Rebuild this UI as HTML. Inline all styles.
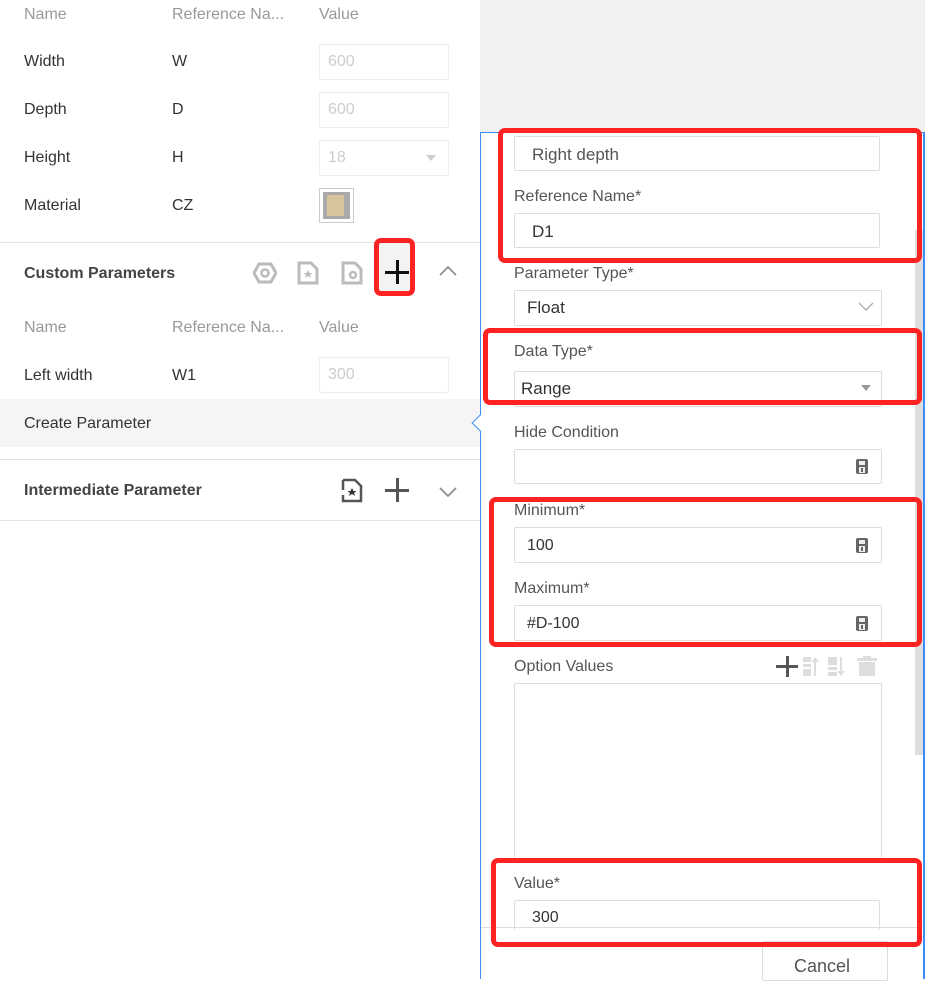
<!DOCTYPE html><html><head><style>
body{margin:0;width:925px;height:979px;position:relative;overflow:hidden;font-family:"Liberation Sans",sans-serif;background:#fff;color:#333}
div,span{position:absolute;box-sizing:border-box}
.t{font-size:16px;line-height:20px;white-space:nowrap}
.h{color:#999}
.l{color:#555}
.inp{border:1px solid #ddd;border-radius:2px;background:#fff}
.dis{border:1px solid #eee;border-radius:2px;color:#ccc;font-size:16px;padding:7px 8px;line-height:20px}
.hr{height:1px;background:#e2e2e2}
.red{border:5px solid #f22;border-radius:7px}
.calc{width:12px;height:15px;background:#666;border-radius:2px}
.calc:before{content:"";position:absolute;left:3px;top:2px;width:6px;height:4px;background:#eee}
.calc:after{content:"";position:absolute;left:3px;top:8px;width:6px;height:4px;border-top:1px solid #eee;border-bottom:1px solid #eee;background:linear-gradient(90deg,#eee 2px,#666 2px,#666 4px,#eee 4px)}
</style></head><body>
<!-- right gray bg -->
<div style="left:480px;top:0;width:445px;height:979px;background:#f2f2f2"></div>
<!-- left panel -->
<div class="t h" style="left:24px;top:5px">Name</div>
<div class="t h" style="left:172px;top:5px">Reference Na...</div>
<div class="t h" style="left:319px;top:5px">Value</div>
<div class="t" style="left:24px;top:52px">Width</div><div class="t" style="left:172px;top:52px">W</div>
<div class="dis" style="left:319px;top:44px;width:130px;height:36px">600</div>
<div class="t" style="left:24px;top:100px">Depth</div><div class="t" style="left:172px;top:100px">D</div>
<div class="dis" style="left:319px;top:92px;width:130px;height:36px">600</div>
<div class="t" style="left:24px;top:148px">Height</div><div class="t" style="left:172px;top:148px">H</div>
<div class="dis" style="left:319px;top:140px;width:130px;height:36px">18<span style="right:12px;top:14px;border:5px solid transparent;border-top:6px solid #ccc;border-bottom:0"></span></div>
<div class="t" style="left:24px;top:196px">Material</div><div class="t" style="left:172px;top:196px">CZ</div>
<div style="left:319px;top:188px;width:35px;height:35px;border:1px solid #ccc"><span style="left:3px;top:3px;width:27px;height:27px;background:#aaa"></span><span style="left:7px;top:6px;width:17px;height:21px;background:#d8c49a"></span></div>
<div class="hr" style="left:0;top:242px;width:480px"></div>
<div class="t" style="left:24px;top:264px;font-weight:bold;color:#444">Custom Parameters</div>
<svg style="position:absolute;left:253px;top:262px" width="24" height="22"><polygon points="6,2 18,2 23,11 18,20 6,20 1,11" fill="none" stroke="#bbb" stroke-width="3"/><circle cx="12" cy="11" r="3.5" fill="none" stroke="#bbb" stroke-width="2.5"/></svg>
<svg style="position:absolute;left:297px;top:261px" width="24" height="24"><path d="M2 2h12l6 6v14H2z" fill="none" stroke="#bbb" stroke-width="3"/><path d="M11 9l1.5 3h3l-2.5 2 1 3-3-2-3 2 1-3-2.5-2h3z" fill="#bbb"/></svg>
<svg style="position:absolute;left:341px;top:261px" width="24" height="24"><path d="M2 2h12l6 6v14H2z" fill="none" stroke="#bbb" stroke-width="3"/><circle cx="12" cy="14" r="3" fill="none" stroke="#bbb" stroke-width="2.5"/></svg>
<div style="left:379px;top:241px;width:33px;height:53px;background:#f3f3f3"></div>
<div style="left:385px;top:271px;width:24px;height:2.5px;background:#111"></div>
<div style="left:396px;top:260px;width:2.5px;height:24px;background:#111"></div>
<div class="red" style="left:374px;top:238px;width:41px;height:58px"></div>
<svg style="position:absolute;left:438px;top:265px" width="20" height="12"><path d="M2 10l8-8 8 8" fill="none" stroke="#888" stroke-width="1.6"/></svg>
<div class="t h" style="left:24px;top:318px">Name</div>
<div class="t h" style="left:172px;top:318px">Reference Na...</div>
<div class="t h" style="left:319px;top:318px">Value</div>
<div class="t" style="left:24px;top:366px">Left width</div><div class="t" style="left:172px;top:366px">W1</div>
<div class="dis" style="left:319px;top:357px;width:130px;height:36px">300</div>
<div style="left:0;top:399px;width:480px;height:48px;background:#f5f5f5"></div>
<div class="t" style="left:24px;top:414px">Create Parameter</div>
<div class="hr" style="left:0;top:459px;width:480px"></div>
<div class="t" style="left:24px;top:481px;font-weight:bold;color:#444">Intermediate Parameter</div>
<svg style="position:absolute;left:341px;top:478px" width="24" height="26"><path d="M2 2h12l6 6v15H2V17M2 12V2" fill="none" stroke="#555" stroke-width="2.5"/><path d="M11 10l1.5 3h3l-2.5 2 1 3-3-2-3 2 1-3-2.5-2h3z" fill="#333"/></svg>
<div style="left:385px;top:489px;width:24px;height:2.5px;background:#555"></div>
<div style="left:396px;top:478px;width:2.5px;height:24px;background:#555"></div>
<svg style="position:absolute;left:438px;top:486px" width="20" height="12"><path d="M2 2l8 8 8-8" fill="none" stroke="#888" stroke-width="1.6"/></svg>
<div class="hr" style="left:0;top:520px;width:480px"></div>
<!-- right panel -->
<div style="left:480px;top:132px;width:445px;height:847px;background:#fff;border-left:1px solid #3a8ef6;border-top:1px solid #3a8ef6;border-right:2px solid #3a8ef6"></div>
<div style="left:474px;top:417px;width:12px;height:12px;background:#fff;border-left:1px solid #3a8ef6;border-bottom:1px solid #3a8ef6;transform:rotate(45deg)"></div>
<div style="left:915px;top:230px;width:8px;height:525px;background:#ddd"></div>
<div class="inp" style="left:514px;top:136px;width:366px;height:35px"></div><div class="t l" style="left:532px;top:145px;font-size:17px">Right depth</div>
<div class="t l" style="left:514px;top:187px">Reference Name*</div>
<div class="inp" style="left:514px;top:213px;width:366px;height:35px"></div><div class="t" style="left:532px;top:222px;font-size:17px">D1</div>
<div class="t l" style="left:514px;top:264px">Parameter Type*</div>
<div class="inp" style="left:514px;top:290px;width:368px;height:36px"></div><div class="t" style="left:527px;top:298px;font-size:17px">Float</div>
<svg style="position:absolute;left:858px;top:302px" width="16" height="10"><path d="M1 1l7 7 7-7" fill="none" stroke="#aaa" stroke-width="1.3"/></svg>
<div class="t l" style="left:514px;top:342px">Data Type*</div>
<div class="inp" style="left:514px;top:371px;width:368px;height:36px"></div><div class="t" style="left:521px;top:379px;font-size:17px">Range</div>
<div style="left:861px;top:385px;border:5px solid transparent;border-top:6px solid #999;border-bottom:0"></div>
<div class="t l" style="left:514px;top:423px">Hide Condition</div>
<div class="inp" style="left:514px;top:449px;width:368px;height:35px"></div><div class="calc" style="left:856px;top:459px"></div>
<div class="t l" style="left:514px;top:501px">Minimum*</div>
<div class="inp" style="left:514px;top:527px;width:368px;height:36px"></div><div class="t" style="left:527px;top:536px">100</div><div class="calc" style="left:856px;top:538px"></div>
<div class="t l" style="left:514px;top:579px">Maximum*</div>
<div class="inp" style="left:514px;top:605px;width:368px;height:36px"></div><div class="t" style="left:527px;top:614px">#D-100</div><div class="calc" style="left:856px;top:616px"></div>
<div class="t l" style="left:514px;top:657px">Option Values</div>
<div style="left:776px;top:665px;width:22px;height:3px;background:#555"></div><div style="left:785.5px;top:656px;width:3px;height:21px;background:#555"></div>
<svg style="position:absolute;left:803px;top:655px" width="76" height="24"><g fill="#ddd"><rect x="0" y="2" width="8" height="5"/><rect x="0" y="9" width="8" height="3"/><rect x="0" y="14" width="8" height="7"/><path d="M12 2l-4 5h3v14h2V7h3z"/><rect x="25" y="2" width="9" height="8"/><rect x="25" y="12" width="9" height="3"/><rect x="25" y="17" width="9" height="4"/><path d="M37 2h2v14h3l-4 5-4-5h3z"/><rect x="54" y="3" width="20" height="3"/><rect x="60" y="1" width="8" height="3"/><path d="M56 7h16v14H56z"/></g></svg>
<div class="inp" style="left:514px;top:683px;width:368px;height:175px;border-bottom:none"></div>
<div class="t l" style="left:514px;top:874px">Value*</div>
<div class="inp" style="left:514px;top:900px;width:366px;height:30px;border-bottom:none"></div><div class="t" style="left:532px;top:908px">300</div>
<div class="hr" style="left:481px;top:927px;width:442px;background:#ddd"></div>
<div class="inp" style="left:762px;top:941px;width:126px;height:40px"></div><div class="t l" style="left:794px;top:956px;font-size:18px">Cancel</div>
<!-- red highlights -->
<div class="red" style="left:498px;top:128px;width:424px;height:135px"></div>
<div class="red" style="left:483px;top:328px;width:439px;height:77px"></div>
<div class="red" style="left:489px;top:497px;width:433px;height:150px"></div>
<div class="red" style="left:491px;top:858px;width:431px;height:89px"></div>
</body></html>
